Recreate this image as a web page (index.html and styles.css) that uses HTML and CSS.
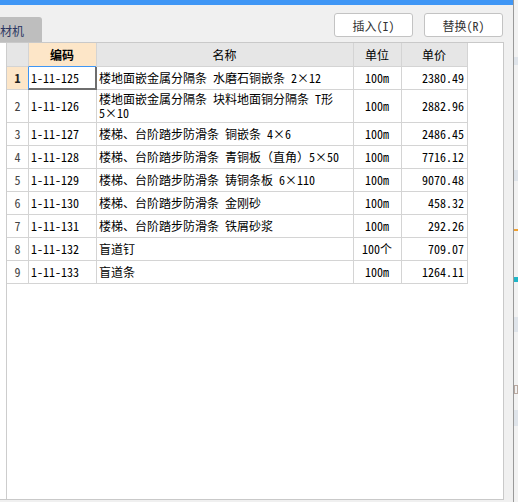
FILE: index.html
```html
<!DOCTYPE html>
<html lang="zh-CN">
<head>
<meta charset="utf-8">
<link rel="stylesheet" href="styles.css">
</head>
<body>
<div class="screen">
  <div class="window">
    <div class="titlebar"></div>
    <div class="toolbar">
      <div class="tab">材机</div>
      <div class="actions">
        <button class="btn">插入(I)</button>
        <button class="btn">替换(R)</button>
      </div>
    </div>
    <div class="panel">
      <div class="sheet">
        <div class="row head">
          <div class="c rh"></div>
          <div class="c hsel">编码</div>
          <div class="c">名称</div>
          <div class="c">单位</div>
          <div class="c">单价</div>
        </div>
        <div class="row">
          <div class="c rh rsel">1</div>
          <div class="c sel">1-11-125</div>
          <div class="c">楼地面嵌金属分隔条 水磨石铜嵌条 2×12</div>
          <div class="c mid">100m</div>
          <div class="c num">2380.49</div>
        </div>
        <div class="row tall">
          <div class="c rh">2</div>
          <div class="c">1-11-126</div>
          <div class="c"><span class="wrap">楼地面嵌金属分隔条 块料地面铜分隔条 T形<br>5×10</span></div>
          <div class="c mid">100m</div>
          <div class="c num">2882.96</div>
        </div>
        <div class="row">
          <div class="c rh">3</div>
          <div class="c">1-11-127</div>
          <div class="c">楼梯、台阶踏步防滑条 铜嵌条 4×6</div>
          <div class="c mid">100m</div>
          <div class="c num">2486.45</div>
        </div>
        <div class="row">
          <div class="c rh">4</div>
          <div class="c">1-11-128</div>
          <div class="c">楼梯、台阶踏步防滑条 青铜板（直角）5×50</div>
          <div class="c mid">100m</div>
          <div class="c num">7716.12</div>
        </div>
        <div class="row">
          <div class="c rh">5</div>
          <div class="c">1-11-129</div>
          <div class="c">楼梯、台阶踏步防滑条 铸铜条板 6×110</div>
          <div class="c mid">100m</div>
          <div class="c num">9070.48</div>
        </div>
        <div class="row">
          <div class="c rh">6</div>
          <div class="c">1-11-130</div>
          <div class="c">楼梯、台阶踏步防滑条 金刚砂</div>
          <div class="c mid">100m</div>
          <div class="c num">458.32</div>
        </div>
        <div class="row">
          <div class="c rh">7</div>
          <div class="c">1-11-131</div>
          <div class="c">楼梯、台阶踏步防滑条 铁屑砂浆</div>
          <div class="c mid">100m</div>
          <div class="c num">292.26</div>
        </div>
        <div class="row">
          <div class="c rh">8</div>
          <div class="c">1-11-132</div>
          <div class="c">盲道钉</div>
          <div class="c mid">100个</div>
          <div class="c num">709.07</div>
        </div>
        <div class="row">
          <div class="c rh">9</div>
          <div class="c">1-11-133</div>
          <div class="c">盲道条</div>
          <div class="c mid">100m</div>
          <div class="c num">1264.11</div>
        </div>
      </div>
    </div>
  </div>
  <div class="strip">
    <div class="blk b1"></div>
    <div class="blk b2"></div>
    <div class="blk b3"></div>
    <div class="blk b4"></div>
    <div class="blk b5"></div>
    <div class="blk b6"></div>
    <div class="blk b7"></div>
  </div>
</div>
</body>
</html>
```

FILE: styles.css
```css
* { box-sizing: border-box; margin: 0; padding: 0; }
html, body { width: 518px; height: 502px; overflow: hidden; }
body {
  background: #f0f0f0;
  font-family: "Noto Sans Mono CJK SC", "Noto Sans CJK SC", sans-serif;
  font-size: 12px;
  color: #000;
}
.screen { display: flex; width: 518px; height: 502px; }
.window { width: 513px; height: 502px; display: flex; flex-direction: column; }
.titlebar { height: 5px; background: #3f96f5; }
.toolbar { height: 37px; display: flex; justify-content: space-between; }
.tab {
  align-self: flex-end;
  width: 42px;
  height: 25px;
  background: #bebebe;
  border-top-right-radius: 3px;
  color: #2b3561;
  line-height: 27px;
  padding-left: 0;
  white-space: nowrap;
  overflow: hidden;
}
.actions { display: flex; gap: 11px; margin: 8px 10px 0 0; }
.btn {
  width: 79px;
  height: 24px;
  background: #fff;
  border: 1px solid #c3c3c3;
  border-radius: 3px;
  font: inherit;
  color: #333;
}
.panel {
  width: 504px;
  height: 458px;
  background: #fff;
  border: 1px solid #c9c9c9;
  border-left: none;
  padding-left: 6px;
}
.sheet { height: 100%; border-left: 1px solid #cdcdcd; }
.row { display: grid; grid-template-columns: 21px 68px 257px 48px 67px; }
.c {
  display: flex;
  align-items: center;
  height: 23px;
  padding: 0 3px 0 2px;
  border-bottom: 1px solid #d4d4d4;
  border-left: 1px solid #d4d4d4;
  white-space: nowrap;
  line-height: 14px;
}
.c:last-child { border-right: 1px solid #d4d4d4; }
.c.rh { border-left: none; justify-content: center; padding: 0; color: #444; }
.c.mid { justify-content: center; }
.c.num { justify-content: flex-end; }
.row.tall .c { height: 33px; }
.wrap { line-height: 14px; }
.head .c { height: 24px; background: #e6e6e6; justify-content: center; }
.head .c.hsel { background: #fde6c8; font-weight: bold; border-bottom-color: #3f96f5; }
.c.rsel { background: #fde6c8; font-weight: bold; color: #222; }
.c.sel {
  position: relative;
  z-index: 1;
  border-left-color: #3f96f5;
  border-bottom-color: #6e6e6e;
  box-shadow: inset -1px -1px 0 #6e6e6e, 1px 0 0 #6e6e6e;
}
.strip {
  width: 5px;
  height: 502px;
  border-left: 1px solid #9a9a9a;
  background: #f2f2f2;
  display: flex;
  flex-direction: column;
}
.blk { background: #dfe4ea; }
.b1 { margin-top: 57px; height: 8px; }
.b2 { margin-top: 105px; height: 11px; }
.b3 { margin-top: 48px; height: 2px; background: #f0a030; }
.b4 { margin-top: 46px; height: 5px; background: #1fb5c7; }
.b5 { margin-top: 35px; height: 15px; }
.b6 { margin-top: 53px; height: 9px; background: none; border: 1px solid #b8a8a0; }
.b7 { margin-top: 16px; height: 16px; }
```
